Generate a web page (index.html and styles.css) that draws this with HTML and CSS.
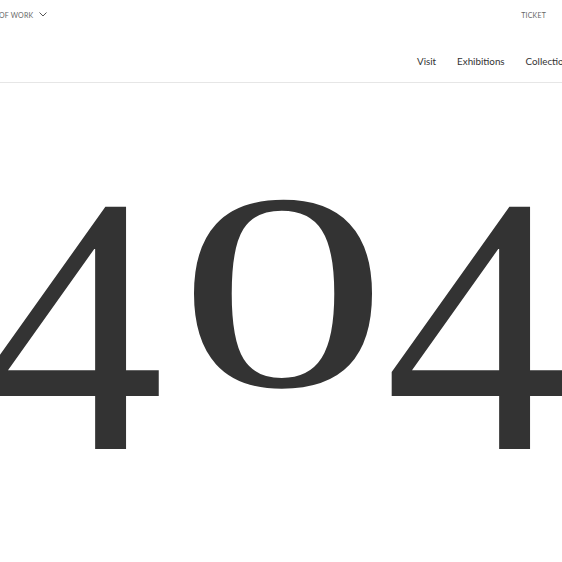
FILE: index.html
```html
<!DOCTYPE html>
<html lang="en">
<head>
<meta charset="utf-8">
<title>Page not found</title>
<link rel="stylesheet" href="styles.css">
</head>
<body>
<header class="site-header">
  <div class="utility-bar">
    <div class="util-left">
      <span class="util-label">OF WORK</span>
      <svg class="chevron" width="8" height="5" viewBox="0 0 8 5" aria-hidden="true"><path d="M0.5 0.5 L4 4 L7.5 0.5" fill="none" stroke="#555" stroke-width="1"/></svg>
    </div>
    <div class="util-right">
      <a class="util-link" href="#">TICKET</a>
      <span class="util-sep">S</span>
    </div>
  </div>
  <nav class="main-nav">
    <a href="#">Visit</a>
    <a href="#">Exhibitions</a>
    <a href="#">Collections</a>
  </nav>
</header>
<main class="error-page">
  <h1 class="error-code"><span class="digit four">4</span><span class="digit zero">0</span><span class="digit four">4</span></h1>
</main>
</body>
</html>
```
FILE: styles.css
```css
html, body {
  margin: 0;
  padding: 0;
  background: #fff;
}
body {
  width: 562px;
  height: 562px;
  overflow: hidden;
  font-family: Lato, "Noto Sans", sans-serif;
  color: #333;
}
.site-header {
  border-bottom: 1px solid #e6e6e6;
}
.utility-bar {
  display: flex;
  justify-content: space-between;
  align-items: center;
  height: 29px;
  font-size: 7px;
  letter-spacing: 0.2px;
  color: #666;
}
.util-left {
  display: flex;
  align-items: center;
  gap: 6px;
  margin-left: -1px;
}
.chevron {
  display: block;
}
.util-right {
  display: flex;
  align-items: center;
  gap: 16px;
  margin-right: -4px;
}
.util-link {
  color: #666;
  text-decoration: none;
}
.util-sep {
  color: #ccc;
}
.main-nav {
  display: flex;
  gap: 21px;
  height: 42px;
  padding-top: 11px;
  align-items: center;
  padding-left: 417px;
  white-space: nowrap;
  font-size: 9.8px;
}
.main-nav a {
  color: #333;
  text-decoration: none;
}
.error-page {
  padding-top: 58px;
}
.error-code {
  margin: 0 0 0 -13px;
  display: flex;
  justify-content: center;
  gap: 40px;
  font-family: "Liberation Serif", serif;
  font-weight: 400;
  font-size: 368px;
  line-height: 1;
  color: #333;
  white-space: nowrap;
}
.digit {
  display: inline-block;
}
.zero {
  font-size: 280px;
  transform: translate(8px, 11px) scaleX(1.5);
}
```
